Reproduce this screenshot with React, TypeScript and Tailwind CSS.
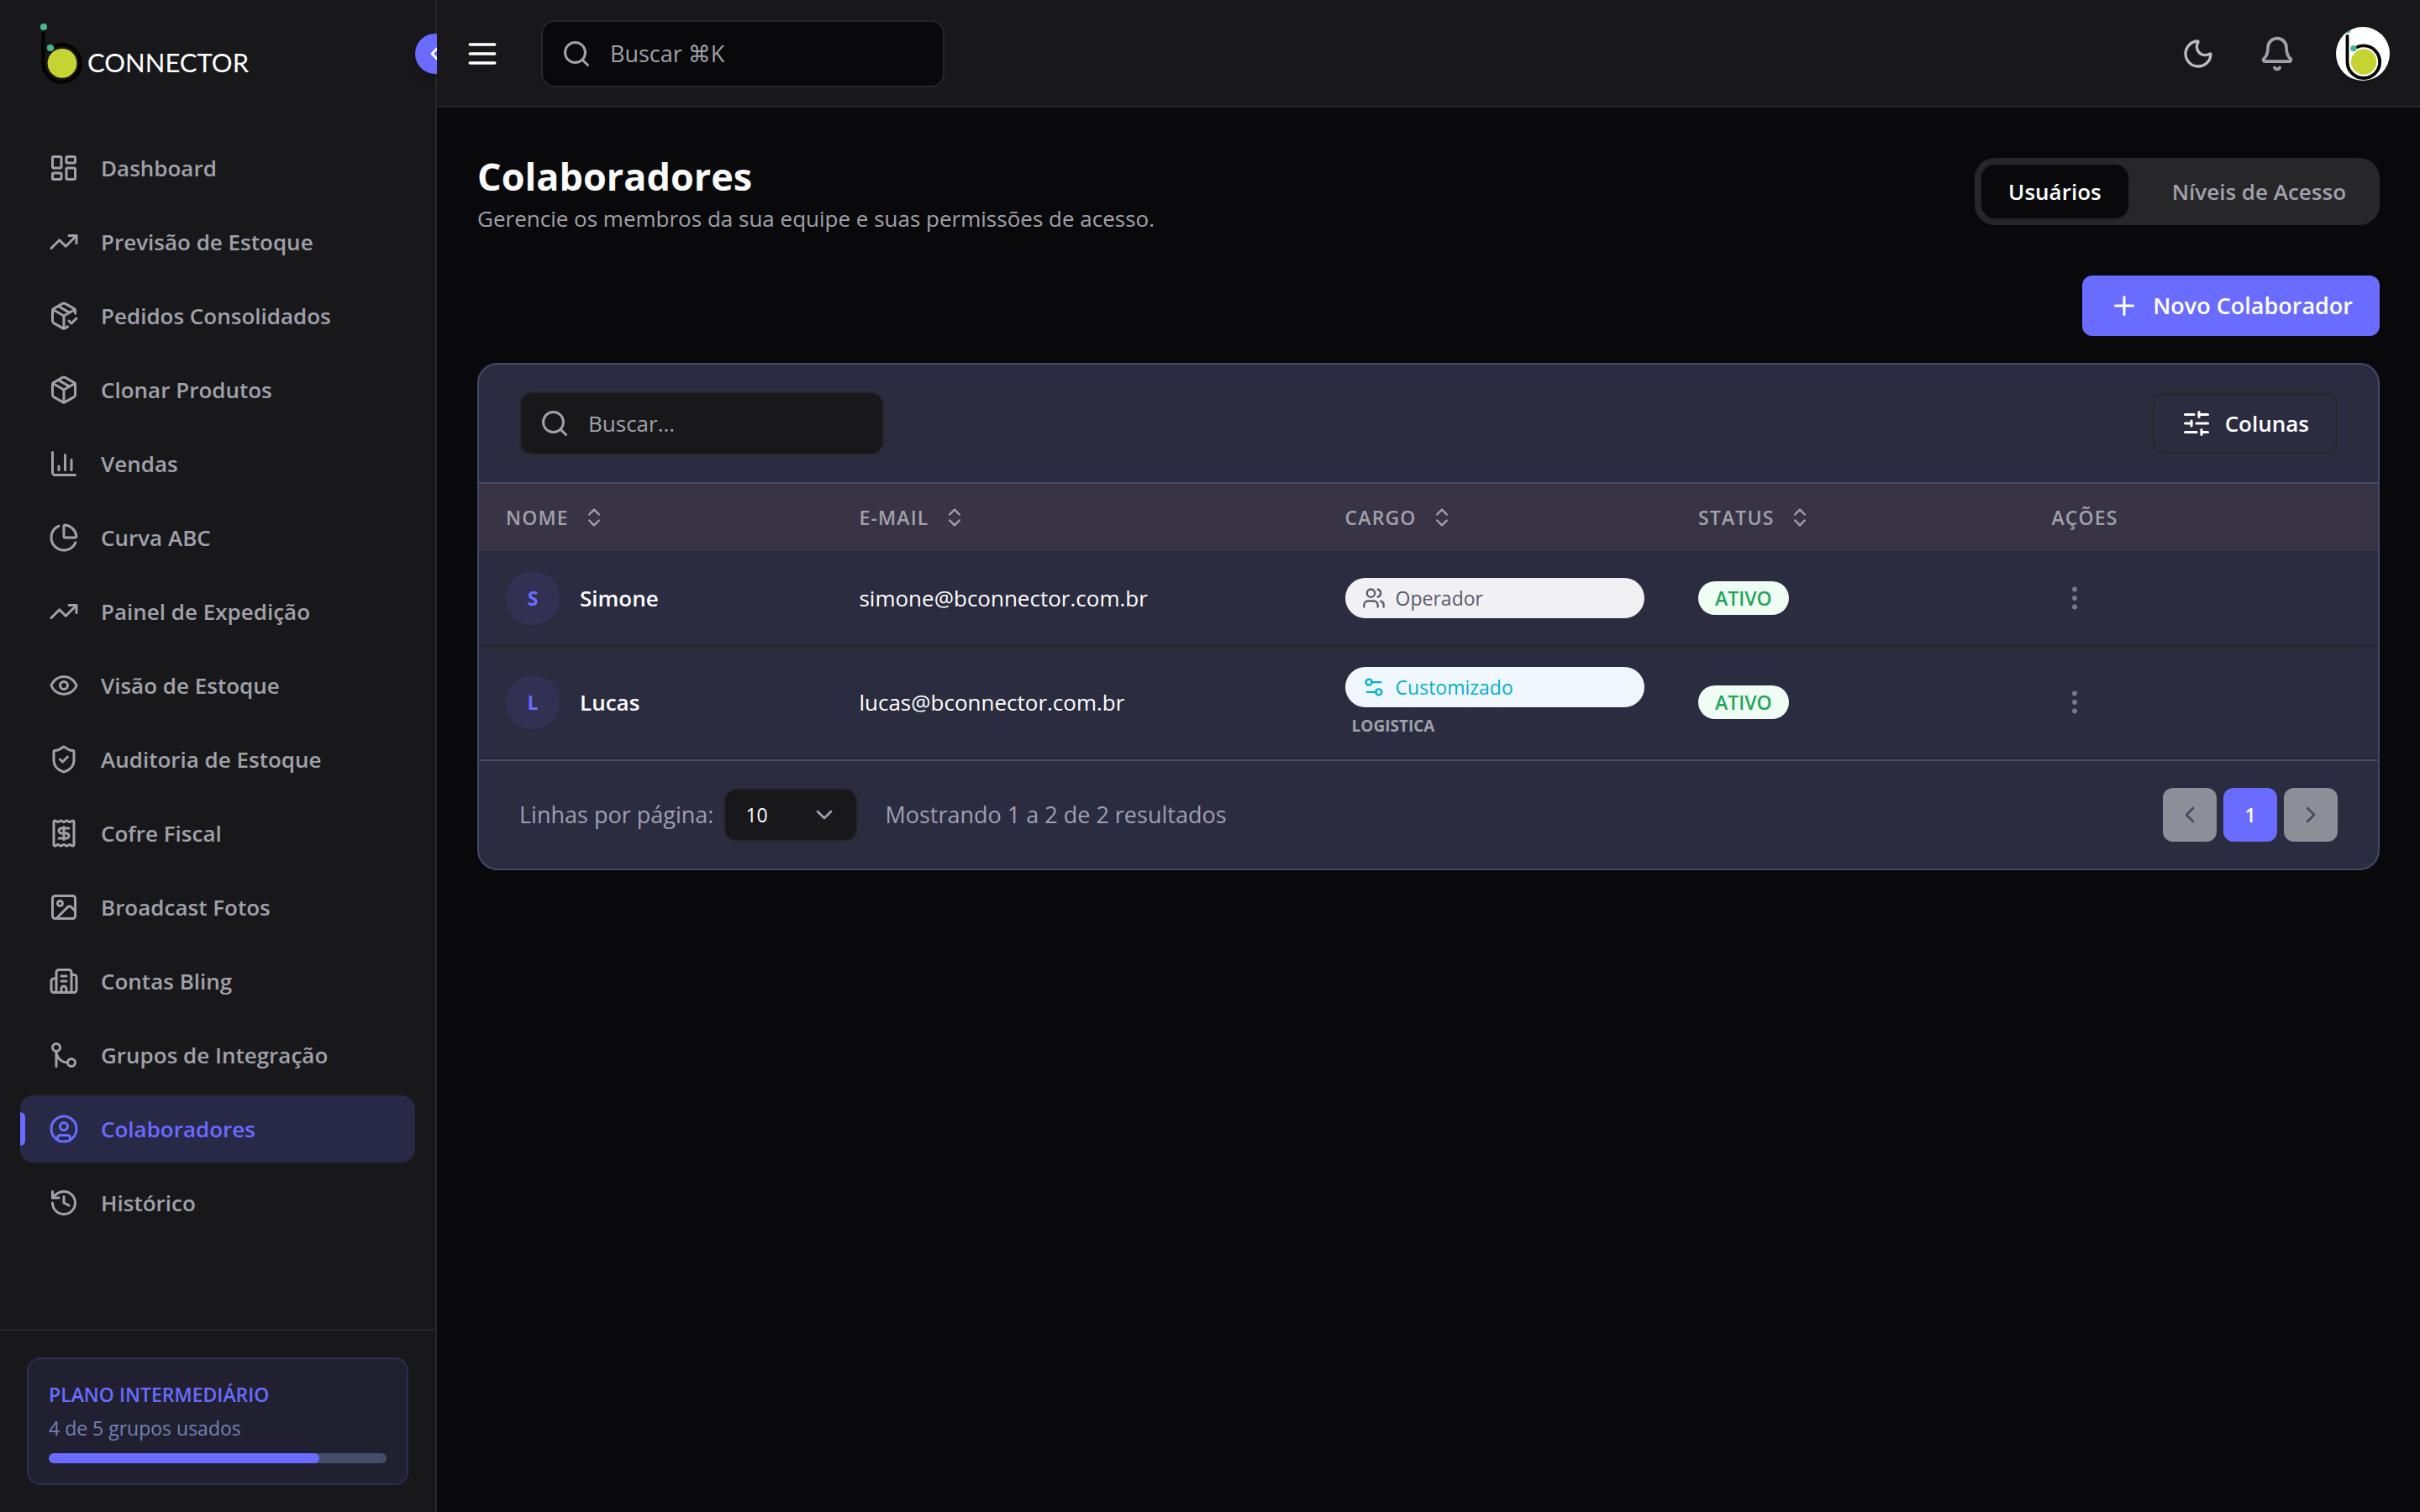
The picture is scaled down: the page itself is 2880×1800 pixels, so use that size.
import type { ReactNode } from "react";
import {
  Bell,
  ChevronDown,
  ChevronLeft,
  ChevronRight,
  ChevronsUpDown,
  CircleUser,
  EllipsisVertical,
  Eye,
  History,
  Image,
  LayoutDashboard,
  Moon,
  Package,
  Plus,
  Search,
  Settings2,
  ShieldCheck,
  SlidersHorizontal,
  TrendingUp,
  Users,
  type LucideIcon,
} from "lucide-react";

function Glyph({ children }: { children: ReactNode }) {
  return (
    <svg
      viewBox="0 0 24 24"
      className="size-9"
      fill="none"
      stroke="currentColor"
      strokeWidth="2"
      strokeLinecap="round"
      strokeLinejoin="round"
      aria-hidden="true"
    >
      {children}
    </svg>
  );
}

function lucide(Icon: LucideIcon) {
  return <Icon className="size-9" aria-hidden="true" />;
}

const boxCheck = (
  <Glyph>
    <path d="m16 16 2 2 4-4" />
    <path d="M21 10V8a2 2 0 0 0-1-1.73l-7-4a2 2 0 0 0-2 0l-7 4A2 2 0 0 0 3 8v8a2 2 0 0 0 1 1.73l7 4a2 2 0 0 0 2 0l2-1.14" />
    <path d="m7.5 4.27 9 5.15" />
    <path d="M3.29 7 12 12l8.71-5" />
    <path d="M12 22V12" />
  </Glyph>
);

const barChart = (
  <Glyph>
    <path d="M3 3v16a2 2 0 0 0 2 2h16" />
    <path d="M18 17V9" />
    <path d="M13 17V5" />
    <path d="M8 17v-3" />
  </Glyph>
);

const pieChart = (
  <Glyph>
    <path d="M21 12c.552 0 1.005-.449.95-.998a10 10 0 0 0-8.953-8.951c-.55-.055-.998.398-.998.95v8a1 1 0 0 0 1 1z" />
    <path d="M21.21 15.89A10 10 0 1 1 8 2.83" />
  </Glyph>
);

const receipt = (
  <Glyph>
    <path d="M4 3a1 1 0 0 1 1-1 1.3 1.3 0 0 1 .7.2l.933.6a1.3 1.3 0 0 0 1.4 0l.934-.6a1.3 1.3 0 0 1 1.4 0l.933.6a1.3 1.3 0 0 0 1.4 0l.933-.6a1.3 1.3 0 0 1 1.4 0l.934.6a1.3 1.3 0 0 0 1.4 0l.933-.6A1.3 1.3 0 0 1 19 2a1 1 0 0 1 1 1v18a1 1 0 0 1-1 1 1.3 1.3 0 0 1-.7-.2l-.933-.6a1.3 1.3 0 0 0-1.4 0l-.934.6a1.3 1.3 0 0 1-1.4 0l-.933-.6a1.3 1.3 0 0 0-1.4 0l-.933.6a1.3 1.3 0 0 1-1.4 0l-.934-.6a1.3 1.3 0 0 0-1.4 0l-.933.6a1.3 1.3 0 0 1-.7.2 1 1 0 0 1-1-1z" />
    <path d="M16 8h-6a2 2 0 1 0 0 4h4a2 2 0 1 1 0 4H8" />
    <path d="M12 17V7" />
  </Glyph>
);

const building = (
  <Glyph>
    <path d="M10 12h4" />
    <path d="M10 8h4" />
    <path d="M14 21v-3a2 2 0 0 0-4 0v3" />
    <path d="M6 10H4a2 2 0 0 0-2 2v7a2 2 0 0 0 2 2h16a2 2 0 0 0 2-2V9a2 2 0 0 0-2-2h-2" />
    <path d="M6 21V5a2 2 0 0 1 2-2h8a2 2 0 0 1 2 2v16" />
  </Glyph>
);

const merge = (
  <Glyph>
    <circle cx="18" cy="18" r="3" />
    <circle cx="6" cy="6" r="3" />
    <path d="M6 21V9a9 9 0 0 0 9 9" />
  </Glyph>
);

const navItems: { label: string; icon: ReactNode; active?: boolean }[] = [
  { label: "Dashboard", icon: lucide(LayoutDashboard) },
  { label: "Previsão de Estoque", icon: lucide(TrendingUp) },
  { label: "Pedidos Consolidados", icon: boxCheck },
  { label: "Clonar Produtos", icon: lucide(Package) },
  { label: "Vendas", icon: barChart },
  { label: "Curva ABC", icon: pieChart },
  { label: "Painel de Expedição", icon: lucide(TrendingUp) },
  { label: "Visão de Estoque", icon: lucide(Eye) },
  { label: "Auditoria de Estoque", icon: lucide(ShieldCheck) },
  { label: "Cofre Fiscal", icon: receipt },
  { label: "Broadcast Fotos", icon: lucide(Image) },
  { label: "Contas Bling", icon: building },
  { label: "Grupos de Integração", icon: merge },
  { label: "Colaboradores", icon: lucide(CircleUser), active: true },
  { label: "Histórico", icon: lucide(History) },
];

const members = [
  { name: "Simone", email: "simone@bconnector.com.br", role: "Operador", custom: false, group: "" },
  { name: "Lucas", email: "lucas@bconnector.com.br", role: "Customizado", custom: true, group: "LOGISTICA" },
];

const columns = [
  { label: "Nome", sortable: true, width: "w-40" },
  { label: "E-mail", sortable: true, width: "w-55" },
  { label: "Cargo", sortable: true, width: "w-40" },
  { label: "Status", sortable: true, width: "w-40" },
  { label: "Ações", sortable: false, width: "w-40" },
];

function BrandMark({ viewBox, className }: { viewBox: string; className: string }) {
  return (
    <svg viewBox={viewBox} className={className} aria-hidden="true">
      <path
        d="M51.5 40v35.5a22.2 22.2 0 1 0 22.2-22.3c-3 0-6 .6-8.6 1.8"
        fill="none"
        stroke="#040405"
        strokeWidth="4.4"
        strokeLinecap="round"
      />
      <circle cx="74" cy="75.3" r="17.4" fill="#c6d433" />
      <circle cx="52" cy="32" r="4.1" fill="#45b491" />
      <circle cx="60" cy="57" r="4.1" fill="#45b491" />
    </svg>
  );
}

function Sidebar() {
  return (
    <aside className="relative flex w-[520px] shrink-0 flex-col border-r-2 border-[#27272a] bg-[#18181b]">
      <div className="flex h-32 items-center px-12">
        <div className="flex items-end gap-1.5">
          <BrandMark viewBox="48 28 50 72" className="h-[72px] w-[50px]" />
          <span className="pb-1.5 font-[Lato] text-[31px] leading-10 text-white">CONNECTOR</span>
        </div>
      </div>
      <button
        type="button"
        aria-label="Recolher menu"
        className="absolute top-10 -right-6 flex size-12 items-center justify-center rounded-full bg-[#696cff] text-white shadow-lg"
      >
        <ChevronLeft className="size-8" />
      </button>

      <nav className="flex flex-1 flex-col gap-2 px-6 pt-8">
        {navItems.map((item) => (
          <a
            key={item.label}
            href="#"
            className={
              item.active
                ? "relative flex h-20 items-center gap-6 overflow-hidden rounded-2xl bg-[#282847] px-8 text-[#696cff]"
                : "relative flex h-20 items-center gap-6 rounded-2xl px-8 text-[#a1a1aa]"
            }
          >
            {item.active ? (
              <span className="absolute top-5 left-0 h-10 w-[6px] rounded-r-md bg-[#696cff]" />
            ) : null}
            <span className="flex w-10 justify-center">{item.icon}</span>
            <span className="text-[26px] font-semibold">{item.label}</span>
          </a>
        ))}
      </nav>

      <div className="border-t-2 border-[#27272a] p-8">
        <div className="rounded-2xl border-2 border-[#2d2d5a] bg-[#212030] p-6">
          <p className="text-[23px] leading-9 font-semibold text-[#696cff]">PLANO INTERMEDIÁRIO</p>
          <p className="mt-1 text-[23px] leading-9 text-[#7480b4]">4 de 5 grupos usados</p>
          <div className="mt-3 h-3 overflow-hidden rounded-full bg-[#454b69]">
            <div className="h-full w-4/5 rounded-full bg-[#696cff]" />
          </div>
        </div>
      </div>
    </aside>
  );
}

function Header() {
  return (
    <header className="flex h-32 items-center justify-between border-b-2 border-[#27272a] bg-[#18181b] pt-0.5 pr-9 pl-8">
      <div className="flex items-center gap-12">
        <button type="button" aria-label="Menu" className="text-white">
          <svg
            viewBox="0 0 24 24"
            className="size-11"
            fill="none"
            stroke="currentColor"
            strokeWidth="2"
            strokeLinecap="round"
          >
            <path d="M4 6h16M4 12h16M4 18h16" />
          </svg>
        </button>
        <label className="flex h-20 w-[480px] items-center gap-[22px] rounded-2xl border-2 border-[#27272a] bg-[#09090b] px-[22px] text-[#a1a1aa]">
          <Search className="size-9 shrink-0" />
          <input
            type="text"
            aria-label="Buscar"
            placeholder="Buscar ⌘K"
            className="w-full min-w-0 bg-transparent text-[27px] outline-none placeholder:text-[#a1a1aa]"
          />
        </label>
      </div>
      <div className="flex items-center gap-12">
        <button type="button" aria-label="Tema" className="flex w-12 justify-center text-[#bdbdbd]">
          <Moon className="size-10" />
        </button>
        <button type="button" aria-label="Notificações" className="text-[#a1a1aa]">
          <Bell className="size-11" />
        </button>
        <button type="button" aria-label="Perfil" className="overflow-hidden rounded-full bg-white shadow-md">
          <BrandMark viewBox="36 27.5 73.5 73.5" className="size-16" />
        </button>
      </div>
    </header>
  );
}

function RoleBadge({ role, custom }: { role: string; custom: boolean }) {
  const Icon = custom ? Settings2 : Users;
  return (
    <div
      className={
        custom
          ? "flex h-12 items-center gap-3 rounded-full bg-[#f0f7ff] px-5 text-[#03b0d0]"
          : "flex h-12 items-center gap-3 rounded-full bg-[#f1f0f2] px-5 text-[#5d596c]"
      }
    >
      <Icon className="size-7" />
      <span className="text-[23px] font-medium">{role}</span>
    </div>
  );
}

function MembersTable() {
  return (
    <table className="w-full table-fixed text-left">
      <thead>
        <tr className="h-20 bg-[#393445]">
          {columns.map((column) => (
            <th key={column.label} className={`${column.width} px-8 font-semibold text-[#a1a1aa]`}>
              <span className="flex items-center gap-4">
                <span className="text-[23px] tracking-wider uppercase">{column.label}</span>
                {column.sortable ? <ChevronsUpDown className="size-7" /> : null}
              </span>
            </th>
          ))}
        </tr>
      </thead>
      <tbody>
        {members.map((member) => (
          <tr key={member.name} className="border-b-2 border-[#27272a]">
            <td className="px-8 py-6">
              <div className="flex items-center gap-6">
                <span className="flex size-16 items-center justify-center rounded-full bg-[#323154] text-[23px] font-bold text-[#696cff]">
                  {member.name[0]}
                </span>
                <span className="text-[26px] font-semibold text-white">{member.name}</span>
              </div>
            </td>
            <td className="px-8 py-6 text-[26px] text-white">{member.email}</td>
            <td className="px-8 py-6">
              <RoleBadge role={member.role} custom={member.custom} />
              {member.group ? (
                <p className="mt-2 pl-2 text-[19px] leading-7 font-bold text-[#a1a1aa]">{member.group}</p>
              ) : null}
            </td>
            <td className="px-8 py-6">
              <span className="inline-flex h-10 items-center rounded-full bg-[#f0fdf4] px-5 align-middle text-[23px] font-semibold text-[#22a55c]">
                ATIVO
              </span>
            </td>
            <td className="px-8 py-6">
              <button
                type="button"
                aria-label={`Ações de ${member.name}`}
                className="flex size-14 items-center justify-center text-[#7e7390]"
              >
                <EllipsisVertical className="size-9" />
              </button>
            </td>
          </tr>
        ))}
      </tbody>
    </table>
  );
}

export default function App() {
  return (
    <div className="flex min-h-screen bg-[#09090b] font-['Segoe_UI','Open_Sans','DejaVu_Sans',sans-serif]">
      <Sidebar />
      <div className="relative z-10 flex min-w-0 flex-1 flex-col bg-[#09090b]">
        <Header />
        <main className="px-12 py-15">
          <div className="flex items-start justify-between">
            <div>
              <h1 className="text-[45px] leading-[44px] font-bold text-[#fafafa]">Colaboradores</h1>
              <p className="mt-1 text-[26px] leading-[48px] text-[#a1a1aa]">
                Gerencie os membros da sua equipe e suas permissões de acesso.
              </p>
            </div>
            <div className="flex h-20 items-center gap-5 rounded-3xl bg-[#27272a] p-2 text-[26px] font-semibold">
              <button type="button" className="h-16 rounded-2xl bg-[#09090b] px-8 text-white shadow-sm">
                Usuários
              </button>
              <button type="button" className="h-16 rounded-2xl px-8 text-[#a1a1aa]">
                Níveis de Acesso
              </button>
            </div>
          </div>

          <div className="mt-11 flex justify-end">
            <button
              type="button"
              className="flex h-18 items-center gap-4 rounded-xl bg-[#696cff] px-8 text-[27px] font-semibold text-white"
            >
              <Plus className="size-9" />
              Novo Colaborador
            </button>
          </div>

          <section className="mt-8 overflow-hidden rounded-3xl border-2 border-[#434968] bg-[#2b2c40]">
            <div className="flex items-center justify-between border-b-2 border-[#434968] px-12 py-8">
              <label className="flex h-19 w-[434px] items-center gap-[22px] rounded-2xl border-2 border-[#27272a] bg-[#18181b] px-[22px] text-[#a1a1aa]">
                <Search className="size-9 shrink-0" />
                <input
                  type="text"
                  aria-label="Buscar colaborador"
                  placeholder="Buscar..."
                  className="w-full min-w-0 bg-transparent text-[26px] outline-none placeholder:text-[#a1a1aa]"
                />
              </label>
              <button
                type="button"
                className="flex h-18 items-center gap-4 rounded-xl border-2 border-[#27272a] px-8 text-[26px] font-semibold text-white"
              >
                <SlidersHorizontal className="size-9" />
                Colunas
              </button>
            </div>

            <MembersTable />

            <div className="flex items-center justify-between border-t-2 border-[#434968] px-12 py-8 text-[27px] text-[#a19eb3]">
              <div className="flex items-center">
                <label htmlFor="page-size">Linhas por página:</label>
                <div className="relative ml-3">
                  <select
                    id="page-size"
                    className="h-16 w-40 appearance-none rounded-2xl border-2 border-[#27272a] bg-[#18181b] px-6 text-[23px] text-white"
                  >
                    <option>10</option>
                    <option>25</option>
                    <option>50</option>
                  </select>
                  <ChevronDown className="pointer-events-none absolute top-4 right-6 size-8" />
                </div>
                <span className="ml-8">Mostrando 1 a 2 de 2 resultados</span>
              </div>
              <div className="flex gap-2">
                <button
                  type="button"
                  aria-label="Página anterior"
                  className="flex size-16 items-center justify-center rounded-xl bg-[#8e8e99] text-[#4b4860]"
                >
                  <ChevronLeft className="size-8" />
                </button>
                <button type="button" className="size-16 rounded-xl bg-[#696cff] text-[23px] font-semibold text-white">
                  1
                </button>
                <button
                  type="button"
                  aria-label="Próxima página"
                  className="flex size-16 items-center justify-center rounded-xl bg-[#8e8e99] text-[#4b4860]"
                >
                  <ChevronRight className="size-8" />
                </button>
              </div>
            </div>
          </section>
        </main>
      </div>
    </div>
  );
}
